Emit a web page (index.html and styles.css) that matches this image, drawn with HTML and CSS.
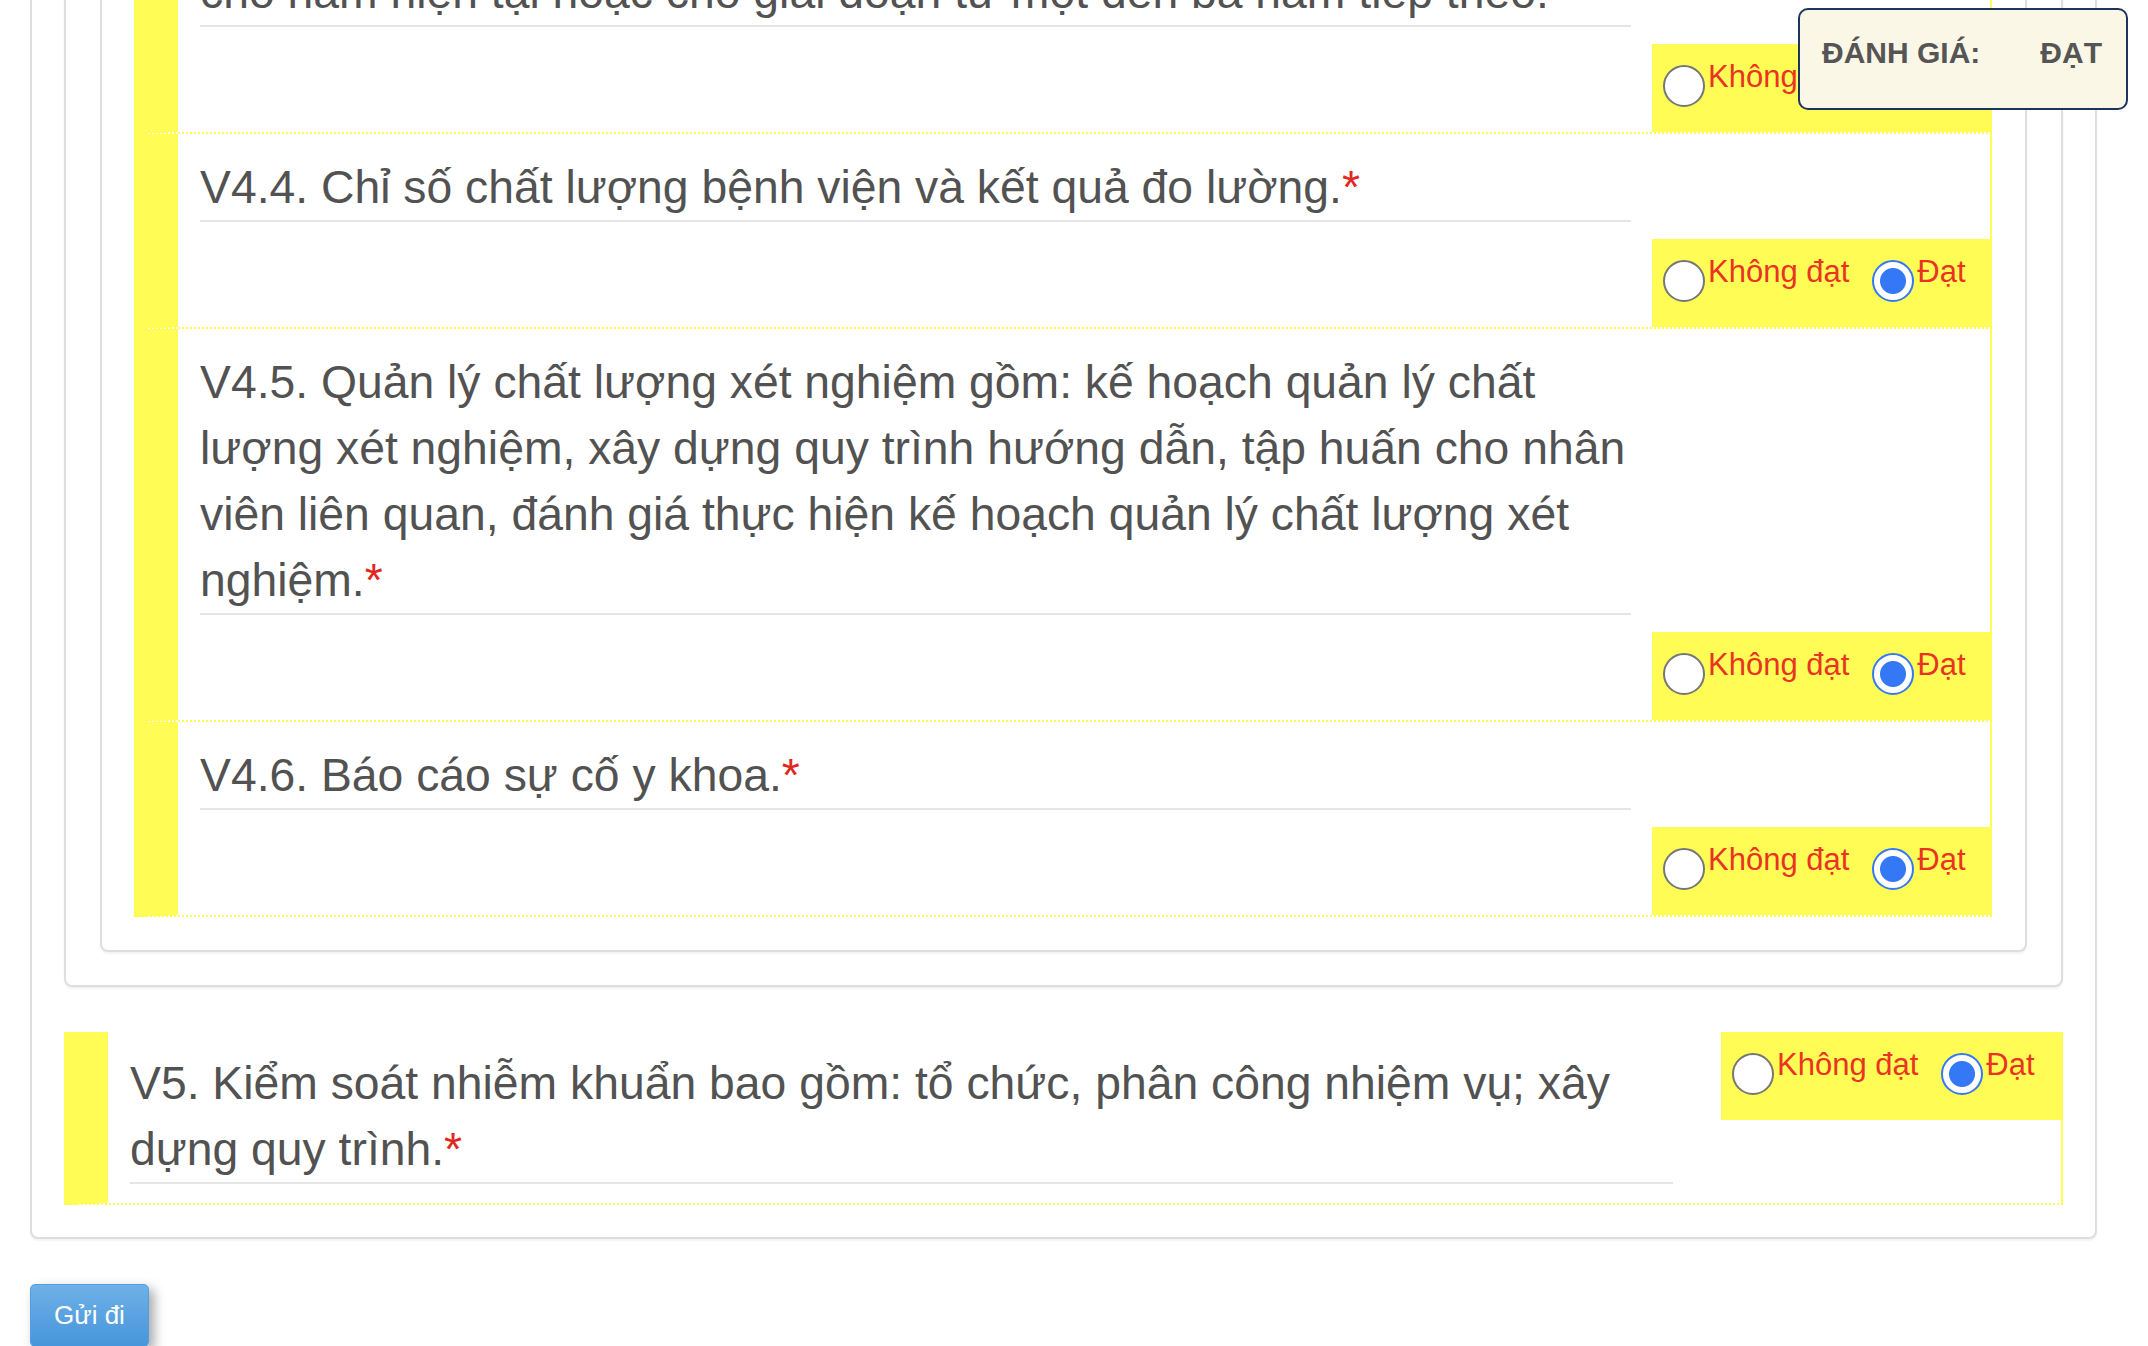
FILE: index.html
```html
<!DOCTYPE html>
<html lang="vi">
<head>
<meta charset="utf-8">
<title>Đánh giá chất lượng</title>
<link rel="stylesheet" href="styles.css">
</head>
<body>
<div class="page">
  <form class="card outer">
    <div class="card mid">
      <div class="card inner">
        <div class="item">
          <div class="q">cho năm hiện tại hoặc cho giai đoạn từ một đến ba năm tiếp theo.</div>
          <div class="opts">
            <label class="opt"><input type="radio" name="v43"><span>Không đạt</span></label>
            <label class="opt"><input type="radio" name="v43" checked><span>Đạt</span></label>
          </div>
        </div>
        <div class="item">
          <div class="q">V4.4. Chỉ số chất lượng bệnh viện và kết quả đo lường.<span class="req">*</span></div>
          <div class="opts">
            <label class="opt"><input type="radio" name="v44"><span>Không đạt</span></label>
            <label class="opt"><input type="radio" name="v44" checked><span>Đạt</span></label>
          </div>
        </div>
        <div class="item">
          <div class="q">V4.5. Quản lý chất lượng xét nghiệm gồm: kế hoạch quản lý chất lượng xét nghiệm, xây dựng quy trình hướng dẫn, tập huấn cho nhân viên liên quan, đánh giá thực hiện kế hoạch quản lý chất lượng xét nghiệm.<span class="req">*</span></div>
          <div class="opts">
            <label class="opt"><input type="radio" name="v45"><span>Không đạt</span></label>
            <label class="opt"><input type="radio" name="v45" checked><span>Đạt</span></label>
          </div>
        </div>
        <div class="item">
          <div class="q">V4.6. Báo cáo sự cố y khoa.<span class="req">*</span></div>
          <div class="opts">
            <label class="opt"><input type="radio" name="v46"><span>Không đạt</span></label>
            <label class="opt"><input type="radio" name="v46" checked><span>Đạt</span></label>
          </div>
        </div>
      </div>
    </div>
    <div class="item row">
      <div class="q">V5. Kiểm soát nhiễm khuẩn bao gồm: tổ chức, phân công nhiệm vụ; xây dựng quy trình.<span class="req">*</span></div>
      <div class="opts wide">
        <label class="opt"><input type="radio" name="v5"><span>Không đạt</span></label>
        <label class="opt"><input type="radio" name="v5" checked><span>Đạt</span></label>
      </div>
    </div>
  </form>
  <button class="submit" type="button">Gửi đi</button>
</div>
<div class="verdict"><span>ĐÁNH GIÁ:</span><span class="verdict-value">ĐẠT</span></div>
</body>
</html>
```

FILE: styles.css
```css
* {
  box-sizing: border-box;
}

html,
body {
  margin: 0;
  padding: 0;
  background: #fff;
  overflow: hidden;
}

body {
  font-family: "Liberation Sans", Arial, sans-serif;
  color: #555;
}

.page {
  margin-top: -164px;
  padding-left: 30px;
  width: 2097px;
}

.card {
  border: 2px solid #dedede;
  border-radius: 8px;
  background: #fff;
  box-shadow: 0 2px 2px rgba(0, 0, 0, 0.05);
}

.outer {
  padding: 32px 32px 32px 32px;
}

.mid {
  padding: 33px 34px 33px 34px;
  margin-bottom: 45px;
}

.inner {
  padding: 32px 33px 33px 32px;
}

.item {
  border-left: 44px solid #fffd55;
  border-right: 2px solid #fffd55;
  border-bottom: 2px dotted #fffd55;
  padding-top: 20px;
  display: flow-root;
}

.q {
  margin-left: 22px;
  width: 79%;
  font-size: 46.3px;
  line-height: 66px;
  color: #525252;
  border-bottom: 2px solid #e5e5e5;
}

.req {
  color: #e0281d;
}

.opts {
  margin: 17px 0 0 auto;
  width: 338px;
  height: 88px;
  background: #fffd55;
  display: flex;
  align-items: flex-start;
  padding: 16px 0 0 11px;
}

.item.row {
  display: flex;
  align-items: flex-start;
  padding-top: 0;
}

.row .q {
  flex: none;
  margin: 18px 0 19px 22px;
}

.row .opts {
  flex: none;
  margin: 0 0 0 auto;
}

.opts.wide {
  width: 340px;
}

.opt {
  display: flex;
  align-items: flex-start;
  font-size: 31px;
  line-height: 34px;
  color: #ea3323;
}

.opt + .opt {
  margin-left: 23px;
}

.opt input {
  -webkit-appearance: none;
  appearance: none;
  flex: none;
  margin: 5px 3px 0 0;
  width: 42px;
  height: 42px;
  border: 2px solid #767676;
  border-radius: 50%;
  background: #fff;
}

.opt input:checked {
  border-color: #3478f6;
  background: radial-gradient(circle at center, #3478f6 12.5px, #fff 13.5px);
}

.submit {
  display: block;
  margin-top: 45px;
  padding: 16px 23px;
  font-family: "Liberation Sans", Arial, sans-serif;
  font-size: 26px;
  line-height: 29px;
  color: #fff;
  border: 1px solid #539de0;
  border-radius: 5px;
  background: linear-gradient(#6eb1e7, #4795db);
  box-shadow: 5px 5px 12px rgba(0, 0, 0, 0.35);
}

.verdict {
  position: absolute;
  top: 8px;
  left: 1798px;
  display: flex;
  padding: 20px 24px 33px 22px;
  border: 2px solid #1c355e;
  border-radius: 10px;
  background: #faf7e6;
  font-family: "Liberation Sans", Arial, sans-serif;
  font-weight: bold;
  font-size: 30px;
  line-height: 45px;
  color: #555;
}

.verdict-value {
  margin-left: 60px;
}
```
